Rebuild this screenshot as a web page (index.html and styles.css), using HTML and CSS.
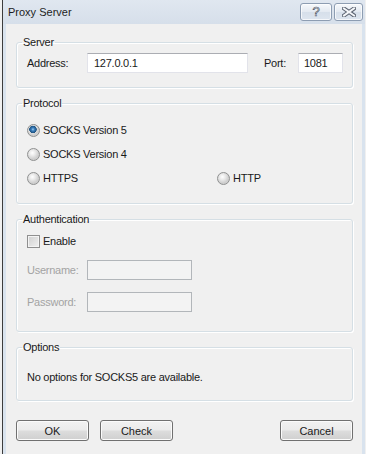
FILE: index.html
```html
<!DOCTYPE html>
<html lang="en">
<head>
  <meta charset="UTF-8">
  <title>Proxy Server</title>
  <link rel="stylesheet" href="styles.css">
</head>
<body>

  <div class="window">
    <div class="titlebar">
      <span class="title">Proxy Server</span>
      <div class="caption-btns">
        <span class="cap-btn help">?</span>
        <span class="cap-btn close">
          <svg width="14" height="10" viewBox="0 0 14 10">
            <path d="M2 1.5 L12 8.5 M12 1.5 L2 8.5" stroke="#5a6270" stroke-width="4" stroke-linecap="square" fill="none"/>
            <path d="M2 1.5 L12 8.5 M12 1.5 L2 8.5" stroke="#f4f6f9" stroke-width="2" stroke-linecap="square" fill="none"/>
          </svg>
        </span>
      </div>
    </div>

    <div class="content">
      <fieldset class="group server">
        <legend>Server</legend>
        <div class="server-row">
          <label class="field-label">Address:</label>
          <input class="text addr" type="text" value="127.0.0.1">
          <label class="port-label">Port:</label>
          <input class="text port" type="text" value="1081">
        </div>
      </fieldset>

      <fieldset class="group protocol">
        <legend>Protocol</legend>
        <div class="opt-row"><span class="radio checked"></span>SOCKS Version 5</div>
        <div class="opt-row"><span class="radio"></span>SOCKS Version 4</div>
        <div class="opt-row split">
          <div class="opt-cell"><span class="radio"></span>HTTPS</div>
          <div class="opt-cell"><span class="radio"></span>HTTP</div>
        </div>
      </fieldset>

      <fieldset class="group auth">
        <legend>Authentication</legend>
        <div class="opt-row"><span class="checkbox"></span>Enable</div>
        <div class="cred-row">
          <label class="field-label disabled">Username:</label>
          <input class="text cred" type="text" disabled>
        </div>
        <div class="cred-row second">
          <label class="field-label disabled">Password:</label>
          <input class="text cred" type="password" disabled>
        </div>
      </fieldset>

      <fieldset class="group options">
        <legend>Options</legend>
        <div class="note">No options for SOCKS5 are available.</div>
      </fieldset>

      <div class="button-row">
        <button class="btn">OK</button>
        <button class="btn">Check</button>
        <button class="btn cancel">Cancel</button>
      </div>
    </div>
  </div>

</body>
</html>
```

FILE: styles.css
```css
body {
  margin: 0;
  padding: 0;
  background-color: #f0f0f0;
  font-family: "Liberation Sans", Arial, sans-serif;
  font-size: 11px;
  color: #1a1a1a;
}

.window {
  width: 363px;
  height: 454px;
  margin-left: 2px;
  border-left: 1px solid #3c3c3c;
  background-color: #d9e3ee;
  display: flex;
  flex-direction: column;
  box-sizing: border-box;
}

.titlebar {
  height: 24px;
  display: flex;
  align-items: center;
  justify-content: space-between;
  background: linear-gradient(#e0e7f0, #d6dfea);
  padding-left: 5px;
}

.title {
  font-size: 11px;
  color: #1e1e1e;
}

.caption-btns {
  display: flex;
  gap: 2px;
  align-self: flex-start;
  margin-top: 3px;
  margin-right: 2px;
}

.cap-btn {
  height: 16px;
  border: 1px solid #8d9db2;
  border-radius: 3px;
  background: linear-gradient(#f7f9fc, #e3e9f1 50%, #d6dfea 51%, #dde5ef);
  box-shadow: inset 0 0 0 1px rgba(255,255,255,0.7);
  display: flex;
  align-items: center;
  justify-content: center;
}

.cap-btn.help {
  width: 30px;
  font-size: 13px;
  color: #f6f8fb;
  -webkit-text-stroke: 0.6px #4f5866;
  line-height: 16px;
}

.cap-btn.close {
  width: 27px;
}

.content {
  flex: 1;
  background-color: #f0f0f0;
  margin-left: 3px;
  margin-right: 3px;
  padding: 11px 9px 0 10px;
  letter-spacing: -0.25px;
}

.group {
  margin: 0 0 8px 0;
  padding: 0 9px 0 10px;
  border: 1px solid #d5dfe5;
  border-radius: 3px;
  box-shadow: 1px 1px 0 #ffffff, inset 1px 1px 0 #ffffff;
  min-width: 0;
}

.group legend {
  margin-left: -5px;
  padding: 0 1px;
  line-height: 14px;
  color: #1a1a1a;
}

.server {
  padding-top: 4px;
  padding-bottom: 14px;
}

.server-row {
  display: flex;
  align-items: center;
  height: 20px;
}

.field-label {
  width: 60px;
  flex-shrink: 0;
}

.field-label.disabled {
  color: #a3a3a3;
}

.port-label {
  margin-left: 16px;
  width: 37px;
}

.text {
  box-sizing: border-box;
  height: 20px;
  margin: 0;
  padding: 0 0 0 6px;
  border: 1px solid #e2e3ea;
  border-top-color: #abadb3;
  background: #ffffff;
  font-family: "Liberation Sans", Arial, sans-serif;
  font-size: 11px;
  letter-spacing: -0.25px;
  color: #1a1a1a;
  outline: none;
}

.addr {
  width: 161px;
  flex-shrink: 0;
}

.port {
  width: 45px;
  padding-left: 5px;
  flex-shrink: 0;
}

.protocol {
  padding-top: 8px;
  padding-bottom: 13px;
}

.opt-row {
  height: 24px;
  display: flex;
  align-items: center;
}

.opt-row.split {
  display: grid;
  grid-template-columns: 190px 1fr;
}

.opt-cell {
  display: flex;
  align-items: center;
}

.radio {
  width: 11px;
  height: 11px;
  border: 1px solid #8f9090;
  border-radius: 50%;
  background: radial-gradient(circle at 40% 35%, #ffffff 0, #e9e9e9 3px, #cfcfcf 6px);
  margin-right: 3px;
  flex-shrink: 0;
}

.radio.checked {
  background:
    radial-gradient(circle at 45% 40%, #a6d3f2 0, #3a7fbf 1.5px, #1f527f 3.5px, transparent 4px),
    radial-gradient(circle at 40% 35%, #ffffff 0, #e9e9e9 3px, #cfcfcf 6px);
}

.checkbox {
  width: 11px;
  height: 11px;
  border: 1px solid #8f8f8f;
  background: linear-gradient(135deg, #cfcfcf, #f1f1f1);
  box-shadow: inset 0 0 0 1px #f4f4f4;
  margin-right: 3px;
  flex-shrink: 0;
}

.auth {
  padding-top: 4px;
  padding-bottom: 19px;
}

.auth .opt-row {
  height: 22px;
}

.cred-row {
  display: flex;
  align-items: center;
  margin-top: 8px;
}

.cred-row.second {
  margin-top: 12px;
}

.cred {
  width: 105px;
  height: 20px;
  background: #f3f3f3;
  border: 1px solid #b2b6ba;
}

.options {
  padding-top: 16px;
  padding-bottom: 16px;
}

.note {
  line-height: 14px;
}

.button-row {
  display: flex;
  gap: 11px;
  margin-top: 19px;
}

.btn {
  width: 73px;
  height: 21px;
  padding: 0;
  border: 1px solid #707070;
  border-radius: 3px;
  background: linear-gradient(#f2f2f2 0%, #ebebeb 48%, #dddddd 52%, #cfcfcf 100%);
  box-shadow: inset 0 0 0 1px #fbfbfb;
  font-family: "Liberation Sans", Arial, sans-serif;
  font-size: 11px;
  color: #1a1a1a;
}

.btn.cancel {
  margin-left: auto;
}
```
